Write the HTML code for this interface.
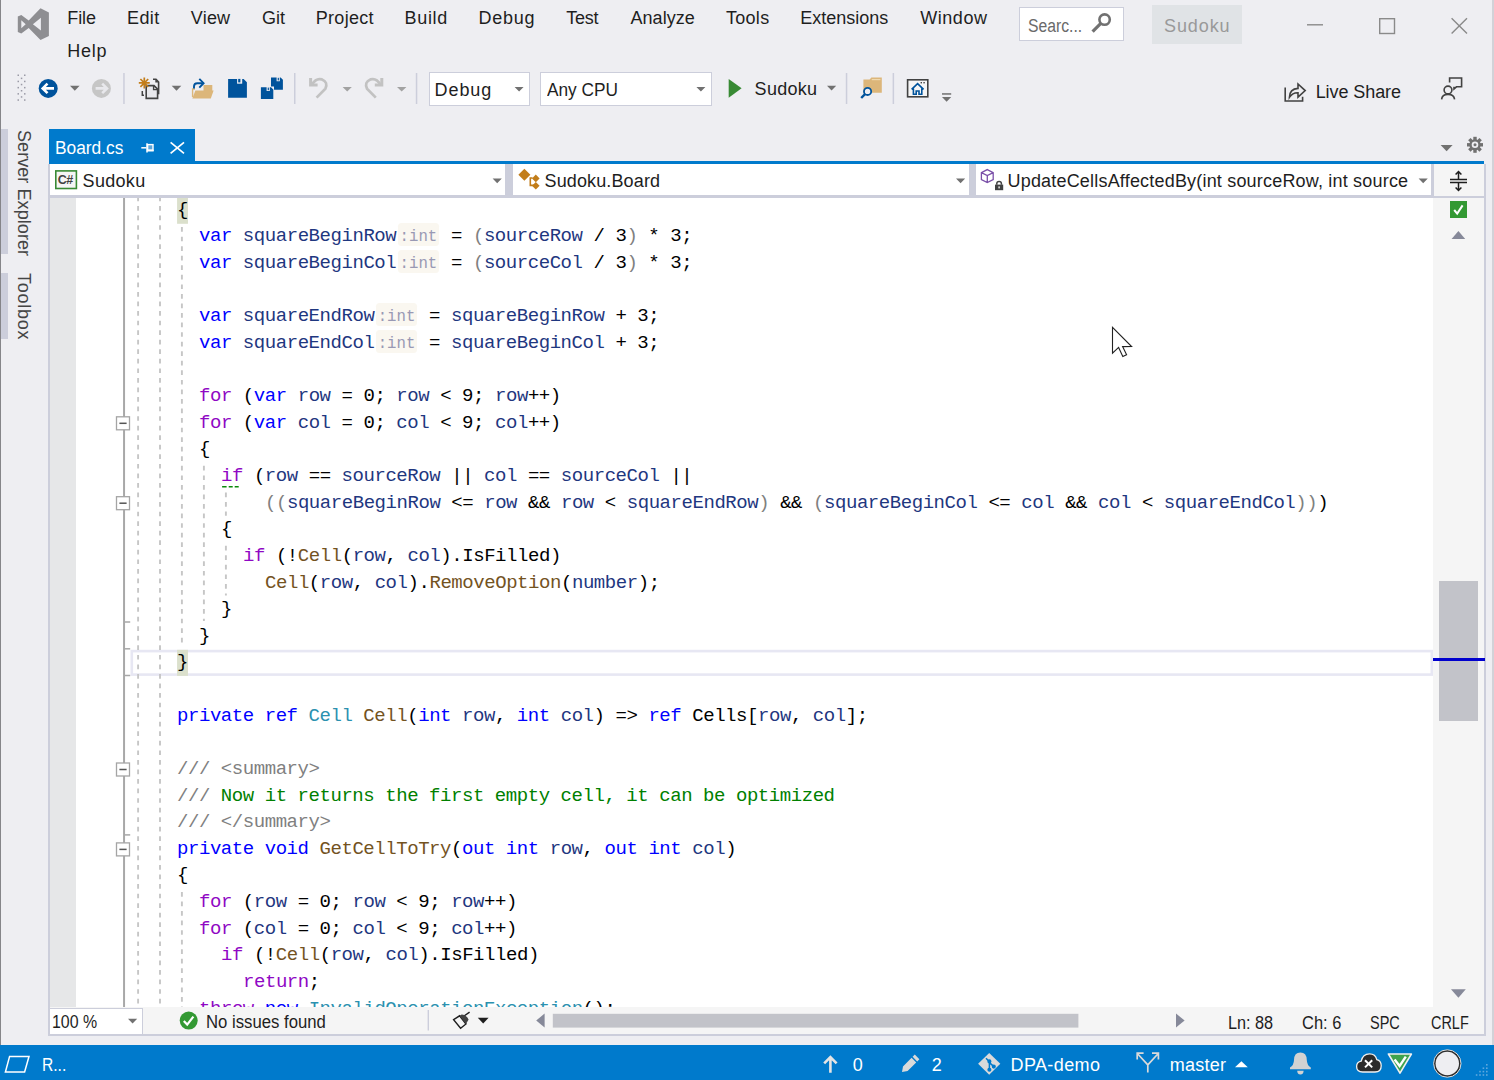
<!DOCTYPE html>
<html>
<head>
<meta charset="utf-8">
<title>Sudoku - Board.cs</title>
<style>
*{box-sizing:border-box;margin:0;padding:0}
html,body{width:1494px;height:1080px;overflow:hidden;background:#EEEEF2;}
body{position:relative;font-family:"Liberation Sans",sans-serif;color:#1E1E1E;font-size:18px;}
.abs{position:absolute}
.m{position:absolute;top:6.5px;font-size:18px;line-height:22px;color:#1E1E1E;white-space:nowrap}
.m2{top:39.5px}
#winborder{left:0;top:0;width:1.3px;height:1080px;background:#858589}
#winborder2{left:1492.3px;top:0;width:1.7px;height:1045px;background:#D2D2D8}
/* toolbar */
.sep{position:absolute;width:1px;background:#CCCEDB}
.combo{position:absolute;background:#fff;border:1px solid #CCCEDB;font-size:18px;line-height:22px;white-space:nowrap}
.arrow{position:absolute;width:0;height:0;border-left:5px solid transparent;border-right:5px solid transparent;border-top:5px solid #717171}
.tx{font-size:18px;line-height:22px;white-space:nowrap;color:#1E1E1E}
.st{color:#fff}
/* editor */
#editor{left:49px;top:198px;width:1384px;height:809px;background:#fff;overflow:hidden}
#gutter{left:0;top:0;width:27px;height:809px;background:#E6E7E8}
#code{left:0;top:-1.28px;width:1384px;font-family:"Liberation Mono",monospace;font-size:19px;letter-spacing:-0.443px;color:#000;white-space:pre}
.ln{position:absolute;left:0;height:27px;line-height:27px;white-space:pre}
.k{color:#0000FF}.c{color:#8F08C4}.v{color:#1F377F}.f{color:#74531F}.t{color:#2B91AF}.g{color:#808080}.gr{color:#008000}.p{color:#000}
.h{font-size:15.7px;letter-spacing:0;color:#9999B4;background:#FAF7F0;border-radius:3.5px;padding:5px 1.5px 0 1.5px;margin:0 1.3px 0 1.8px}
.bh{}
.ci{color:#8F08C4}
.vl{position:absolute;width:0;border-left:1px dashed #BDBDBD}
</style>
</head>
<body>
<div id="winborder" class="abs"></div>
<div id="winborder2" class="abs"></div>

<!-- MENU -->
<div id="menu">
<span id="m_file" class="m" style="left:67.3px;letter-spacing:-0.13px">File</span>
<span id="m_edit" class="m" style="left:127.0px;letter-spacing:0.37px">Edit</span>
<span id="m_view" class="m" style="left:190.8px;letter-spacing:0.20px">View</span>
<span id="m_git" class="m" style="left:262.0px;letter-spacing:0.05px">Git</span>
<span id="m_project" class="m" style="left:315.8px;letter-spacing:0.28px">Project</span>
<span id="m_build" class="m" style="left:404.6px;letter-spacing:0.67px">Build</span>
<span id="m_debug" class="m" style="left:478.4px;letter-spacing:0.80px">Debug</span>
<span id="m_test" class="m" style="left:566.3px;letter-spacing:-0.30px">Test</span>
<span id="m_analyze" class="m" style="left:630.5px;letter-spacing:0.05px">Analyze</span>
<span id="m_tools" class="m" style="left:726.0px;letter-spacing:0.28px">Tools</span>
<span id="m_extensions" class="m" style="left:800.2px">Extensions</span>
<span id="m_window" class="m" style="left:920.2px;letter-spacing:0.56px">Window</span>
<span id="m_help" class="m m2" style="left:67.3px;letter-spacing:0.70px">Help</span>

<svg class="abs" style="left:0;top:0" width="60" height="48" viewBox="0 0 60 48"><path fill="#8E8E92" fill-rule="evenodd" d="M40.5 8.3 L48.9 12.4 L48.9 35.9 L40.5 40 L28.7 28 L21.3 33.6 L17.8 31.9 L17.8 16.4 L21.3 14.9 L28.7 20.6 Z M21.3 20.2 L21.3 28.3 L25.7 24.2 Z M40.9 17.8 L40.9 30.6 L32.9 24.3 Z"/></svg>
<div class="abs" style="left:1019px;top:7px;width:105px;height:34px;background:#fff;border:1.5px solid #CCCEDB"></div>
<span class="abs" id="searchtxt" style="left:1027.7px;top:14.5px;font-size:18px;line-height:22px;color:#6A6A6A;white-space:nowrap;transform:scaleX(0.873);transform-origin:0 0">Searc...</span>
<svg class="abs" style="left:1090px;top:12px" width="23" height="23" viewBox="0 0 23 23"><circle cx="14.6" cy="7.6" r="5.2" fill="none" stroke="#717171" stroke-width="2.6"/><path d="M10.8 11.4 L2.6 19.6" stroke="#717171" stroke-width="3.2" stroke-linecap="butt"/></svg>
<div class="abs" style="left:1152px;top:5px;width:90px;height:39px;background:#E0E3E6"></div>
<span class="abs" id="titletxt" style="left:1164.0px;top:15px;font-size:18px;line-height:22px;color:#999999;white-space:nowrap;letter-spacing:0.90px">Sudoku</span>
<svg class="abs" style="left:1300px;top:10px" width="180" height="32" viewBox="0 0 180 32"><g stroke="#8A8A8A" stroke-width="1.4" fill="none"><path d="M7 14.8 H23"/><rect x="79.7" y="8.7" width="14.8" height="14.8"/><path d="M151.6 8.2 L167 23.6 M167 8.2 L151.6 23.6"/></g></svg>
</div>

<!-- TOOLBAR -->
<div id="toolbar">
<svg class="abs" style="left:0;top:68px" width="1000" height="42" viewBox="0 68 1000 42">
<!-- grip -->
<g fill="#9A9AA6">
<rect x="17.5" y="74.5" width="1.5" height="1.5"/><rect x="24" y="74.5" width="1.5" height="1.5"/>
<rect x="20.8" y="77.6" width="1.5" height="1.5"/>
<rect x="17.5" y="80.7" width="1.5" height="1.5"/><rect x="24" y="80.7" width="1.5" height="1.5"/>
<rect x="20.8" y="83.8" width="1.5" height="1.5"/>
<rect x="17.5" y="86.9" width="1.5" height="1.5"/><rect x="24" y="86.9" width="1.5" height="1.5"/>
<rect x="20.8" y="90" width="1.5" height="1.5"/>
<rect x="17.5" y="93.1" width="1.5" height="1.5"/><rect x="24" y="93.1" width="1.5" height="1.5"/>
<rect x="20.8" y="96.2" width="1.5" height="1.5"/>
<rect x="17.5" y="99.3" width="1.5" height="1.5"/><rect x="24" y="99.3" width="1.5" height="1.5"/>
</g>
<!-- back -->
<circle cx="48.2" cy="88.4" r="9.5" fill="#00539C"/>
<path d="M54 88.4 H43.5 M47.5 83.6 L42.7 88.4 L47.5 93.2" stroke="#fff" stroke-width="2.6" fill="none"/>
<path d="M70 85.8 H79.6 L74.8 90.8 Z" fill="#717171"/>
<!-- forward -->
<circle cx="101.4" cy="88.4" r="9.5" fill="#C6C6C6"/>
<path d="M95.6 88.4 H106 M102.2 83.6 L107 88.4 L102.2 93.2" stroke="#E8E8EC" stroke-width="2.6" fill="none"/>
<rect x="123.2" y="73" width="1.5" height="31" fill="#CCCEDB"/>
<!-- new item -->
<g>
<path d="M153 79.2 H156 L158.6 82 V93.5 H157" fill="none" stroke="#424242" stroke-width="1.6"/>
<path d="M155.3 79 V82.5 H158.8 Z" fill="#424242"/>
<path d="M146.2 85.6 H154 L157.6 89.2 V98.4 H146.2 Z" fill="#E8E8EC" stroke="#424242" stroke-width="1.6"/>
<path d="M153.6 85.6 V89.6 H157.6" fill="none" stroke="#424242" stroke-width="1.4"/>
<path d="M142.3 91 V95.2 H144" fill="none" stroke="#424242" stroke-width="1.5"/>
<g stroke="#C27D1A" stroke-width="1.7"><path d="M144.3 77.4 V88.4 M138.8 82.9 H149.8 M140.4 79 L148.2 86.8 M148.2 79 L140.4 86.8"/></g>
</g>
<path d="M171.7 85.8 H181.3 L176.5 90.8 Z" fill="#717171"/>
<!-- open folder -->
<g>
<path d="M203.5 85 H212.3 V91 H203.5 Z" fill="#DCB67A"/>
<path d="M192.3 98.6 L195.4 90.4 H213.6 L210.8 98.6 Z" fill="#DCB67A"/>
<path d="M192.6 97 V89 H195" stroke="#DCB67A" stroke-width="1.4" fill="none"/>
<path d="M194 88.6 V86.6 Q194 83.2 197.4 83.2 H202.6" fill="none" stroke="#00539C" stroke-width="1.9"/>
<path d="M199.3 78.8 L203.6 83.2 L199.3 87.6" fill="none" stroke="#00539C" stroke-width="1.9"/>
</g>
<!-- save -->
<path fill="#00539C" d="M228.1 79 H243.6 L246.9 82.3 V97.8 H228.1 Z"/><rect x="237.1" y="78.9" width="5.1" height="4.8" fill="#EEEEF2"/><rect x="238.2" y="78.9" width="2.2" height="3.5" fill="#00539C"/>
<!-- save all -->
<g fill="#00539C" fill-rule="evenodd">
<path d="M271 77.4 H280.6 L282.9 79.8 V89.8 H274 V86.6 H271 Z M276.6 77.4 V81.2 H279.8 V77.4 Z"/>
<rect x="277.7" y="77.8" width="1.2" height="2.6"/>
<path d="M260.9 87.2 H271 L273.3 89.6 V99.1 H260.9 Z M266.6 87.2 V91 H269.8 V87.2 Z"/>
<rect x="267.7" y="87.6" width="1.2" height="2.6"/>
</g>
<rect x="294" y="73" width="1.5" height="31" fill="#CCCEDB"/>
<!-- undo -->
<g fill="none" stroke="#C2C2C2" stroke-width="2.7">
<path d="M310.6 78 V85 H317.6" stroke-width="3"/>
<path d="M312 84.4 Q316 77.6 322 79.4 Q328.4 82.2 325.4 88.6 L316.6 97.6"/>
</g>
<path d="M342.6 87 H351.8 L347.2 91.6 Z" fill="#A2A2A2"/>
<!-- redo -->
<g fill="none" stroke="#C2C2C2" stroke-width="2.7">
<path d="M381.8 78 V85 H374.8" stroke-width="3"/>
<path d="M380.4 84.4 Q376.4 77.6 370.4 79.4 Q364 82.2 367 88.6 L375.8 97.6"/>
</g>
<path d="M397 87 H406.4 L401.7 91.6 Z" fill="#A2A2A2"/>
<rect x="415.8" y="73" width="1.5" height="31" fill="#CCCEDB"/>
<!-- run -->
<path d="M728.7 79 L741.6 88.3 L728.7 97.7 Z" fill="#388A34"/>
<path d="M827 85.8 H836.2 L831.6 90.6 Z" fill="#717171"/>
<rect x="845.8" y="73" width="1.5" height="31" fill="#CCCEDB"/>
<!-- find in files -->
<g>
<path d="M863.4 79.6 H869.6 L871.4 77.6 H881.8 V92.8 H863.4 Z" fill="#DCB67A"/>
<rect x="871.8" y="79" width="8.6" height="1.2" fill="#EFD9B0"/>
<circle cx="867.6" cy="91.4" r="3.6" fill="#EEEEF2" stroke="#00539C" stroke-width="1.8"/>
<path d="M865 94.2 L861.2 98" stroke="#00539C" stroke-width="2.4"/>
</g>
<rect x="892.6" y="73" width="1.5" height="31" fill="#CCCEDB"/>
<!-- home window -->
<g>
<rect x="907.6" y="79.8" width="20.2" height="17" fill="#F5F5F5" stroke="#424242" stroke-width="1.6"/>
<path d="M911.6 89.4 L917.6 83.6 L923.6 89.4 M913.4 88.6 V94.2 H916.2 V91 H919 V94.2 H921.8 V88.6" fill="none" stroke="#00539C" stroke-width="1.6"/>
<rect x="920.6" y="82" width="1.4" height="1.4" fill="#424242"/><rect x="923.4" y="82" width="1.4" height="1.4" fill="#424242"/>
</g>
<!-- overflow -->
<rect x="942" y="93.2" width="9.2" height="1.5" fill="#717171"/>
<path d="M942 97 H951.2 L946.6 101.8 Z" fill="#717171"/>
</svg>
<div class="combo" style="left:428.5px;top:71.5px;width:101.5px;height:34px;border-width:1.5px"></div>
<span class="abs tx" id="t_debug" style="left:434.5px;top:78.5px;letter-spacing:0.95px">Debug</span>
<div class="combo" style="left:540px;top:71.5px;width:172px;height:34px;border-width:1.5px"></div>
<span class="abs tx" id="t_anycpu" style="left:546.5px;top:78.5px;transform:scaleX(0.959);transform-origin:0 0">Any CPU</span>
<svg class="abs" style="left:510px;top:84px" width="200" height="10" viewBox="510 84 200 10"><path d="M514.6 87 H523.6 L519.1 91.6 Z M696.4 87 H705.4 L700.9 91.6 Z" fill="#717171"/></svg>
<span class="abs tx" id="t_run" style="left:754.6px;top:78px;letter-spacing:0.28px">Sudoku</span>
<!-- live share -->
<svg class="abs" style="left:1280px;top:74px" width="190" height="32" viewBox="1280 74 190 32">
<g fill="none" stroke="#424242" stroke-width="1.6">
<path d="M1285.2 87.6 V101 H1302.6 V96.8"/>
<path d="M1289.4 97.4 Q1289.6 88.8 1298 88.4 V84 L1305.2 90.6 L1298 97.2 V92.8 Q1292.6 92.6 1289.4 97.4 Z"/>
<circle cx="1448" cy="90" r="3.9"/>
<path d="M1441.6 99.4 Q1442 94.4 1448 94.4 Q1454 94.4 1454.6 99.4"/>
<path d="M1449.6 82.4 V78 H1461.6 V86.8 H1456.4 L1454 89 V86.8"/>
</g>
</svg>
<span class="abs tx" id="t_live" style="left:1315.7px;top:81px;letter-spacing:-0.08px">Live Share</span>
</div>

<div id="side">
<div class="abs" style="left:1.3px;top:129px;width:6.5px;height:124.5px;background:#CCCEDB"></div>
<div class="abs" style="left:1.3px;top:273px;width:6.5px;height:66px;background:#CCCEDB"></div>
<span class="abs tx" id="t_se" style="left:12.5px;top:130.3px;letter-spacing:0.07px;writing-mode:vertical-rl;line-height:22px;color:#444">Server Explorer</span>
<span class="abs tx" id="t_tb" style="left:12.5px;top:273px;letter-spacing:0.75px;writing-mode:vertical-rl;line-height:22px;color:#444">Toolbox</span>
</div>

<!-- TABS -->
<div id="tabs">
<div class="abs" style="left:49px;top:129px;width:145.5px;height:33px;background:#007ACC"></div>
<div class="abs" style="left:49px;top:160.5px;width:1435px;height:3.5px;background:#007ACC"></div>
<span class="abs tx" id="t_tab" style="left:54.8px;top:136.5px;color:#fff;transform:scaleX(0.963);transform-origin:0 0">Board.cs</span>
<svg class="abs" style="left:138px;top:138px" width="52" height="20" viewBox="138 138 52 20"><g stroke="#fff" fill="none">
<path d="M141.3 147.8 H146.4" stroke-width="1.5"/><path d="M147 143.2 V152.6" stroke-width="1.5"/><rect x="147.6" y="144.6" width="5.4" height="5.6" stroke-width="1.4" fill="#5BA7DD"/><path d="M147 150.6 H153.7" stroke-width="1.8"/>
<path d="M170.6 142.4 L184 153.4 M184 142.4 L170.6 153.4" stroke-width="1.7"/></g></svg>
<svg class="abs" style="left:1436px;top:134px" width="52" height="22" viewBox="1436 134 52 22">
<path d="M1440.6 145 H1452.6 L1446.6 151.2 Z" fill="#717171"/>
<g transform="translate(1475 144.8)"><g fill="#717171"><circle r="5.6"/>
<rect x="-1.7" y="-8" width="3.4" height="16"/><rect x="-1.7" y="-8" width="3.4" height="16" transform="rotate(45)"/><rect x="-1.7" y="-8" width="3.4" height="16" transform="rotate(90)"/><rect x="-1.7" y="-8" width="3.4" height="16" transform="rotate(135)"/></g>
<circle r="3.3" fill="#EEEEF2"/><circle r="1.5" fill="#717171"/></g>
</svg>
</div>

<!-- NAVBAR -->
<div id="navbar">
<div class="abs" style="left:48px;top:164px;width:1437.5px;height:34px;background:#CCCEDB"></div>
<div class="abs" style="left:50px;top:164px;width:455px;height:31.3px;background:#fff"></div>
<div class="abs" style="left:512.8px;top:164px;width:456px;height:31.3px;background:#fff"></div>
<div class="abs" style="left:976px;top:164px;width:455.2px;height:31.3px;background:#fff"></div>
<div class="abs" style="left:1434px;top:164px;width:50px;height:31.8px;background:#F5F5F5"></div>
<svg class="abs" style="left:50px;top:164px" width="1434" height="32" viewBox="50 164 1434 32">
<path d="M492.6 178.6 H501.8 L497.2 183.2 Z M956 178.6 H965.2 L960.6 183.2 Z M1418.6 178.6 H1427.8 L1423.2 183.2 Z" fill="#717171"/>
<!-- c# icon -->
<rect x="55.8" y="170.9" width="20.6" height="17.6" fill="#F5F5F5" stroke="#388A34" stroke-width="1.6"/>
<!-- class icon -->
<g fill="#C27D1A"><path d="M524.4 168.8 L530.4 174.8 L524.4 180.8 L518.4 174.8 Z"/>
<path d="M529.5 177.2 H532.6 V178.8 H531.1 V184.6 H534 V186.2 H529.5 Z"/>
<path d="M535.8 174.6 L539.6 178.4 L535.8 182.2 L532 178.4 Z"/><path d="M535.8 182 L539.6 185.8 L535.8 189.6 L532 185.8 Z"/></g>
<!-- cube -->
<g fill="none" stroke="#7A4FA8" stroke-width="1.3"><path d="M987.3 169.6 L993.2 172.6 V179.6 L987.3 182.6 L981.4 179.6 V172.6 Z M981.4 172.6 L987.3 175.6 L993.2 172.6 M987.3 175.6 V182.6"/></g>
<!-- lock -->
<rect x="995" y="184.6" width="8.2" height="5.6" fill="#424242"/><path d="M996.8 184.8 V183.6 Q996.8 181.4 999.1 181.4 Q1001.4 181.4 1001.4 183.6 V184.8" fill="none" stroke="#424242" stroke-width="1.5"/><rect x="998.4" y="186.4" width="1.4" height="2" fill="#EEE"/>
<!-- split -->
<g stroke="#1E1E1E" stroke-width="1.5" fill="none"><path d="M1450 179.4 H1467 M1450 182.6 H1467 M1458.5 172 V179 M1458.5 183 V190 M1455.6 174.6 L1458.5 171.6 L1461.4 174.6 M1455.6 187.4 L1458.5 190.4 L1461.4 187.4"/></g>
</svg>
<span class="abs" style="left:57.8px;top:171.8px;font-size:12.5px;line-height:17px;font-weight:bold;color:#424242;letter-spacing:-0.6px">C#</span>
<span class="abs tx" id="t_nav1" style="left:82.6px;top:170px;letter-spacing:0.30px">Sudoku</span>
<span class="abs tx" id="t_nav2" style="left:544.5px;top:170px;letter-spacing:0.13px">Sudoku.Board</span>
<div class="abs" style="left:1008px;top:166px;width:400px;height:28px;overflow:hidden"><span class="abs tx" id="t_nav3" style="left:-0.5px;top:4px;letter-spacing:0.19px">UpdateCellsAffectedBy(int sourceRow, int sourceCol, int number)</span></div>
</div>

<!-- EDITOR -->
<div id="editor" class="abs">
<div id="gutter" class="abs"></div>
<div id="guides">
<svg class="abs" style="left:0;top:0" width="1384" height="809" viewBox="49 198 1384 809">
<rect x="131.8" y="651.1" width="1300" height="23.5" fill="none" stroke="#E7E7F3" stroke-width="2.6"/>
<rect x="177.07" y="197" width="10.9" height="26.8" fill="#DBE0CC"/>
<rect x="177.07" y="649.8" width="10.9" height="26.1" fill="#DBE0CC"/>
<path d="M222.1 486.75 H226.6 M228.7 486.75 H232.7 M234.7 486.75 H238.7" stroke="#0A8A0A" stroke-width="1.7" fill="none"/>
<path d="M138.1 196.50 V1007.00" stroke="#C6C6C6" stroke-width="1.9" stroke-dasharray="4.7 4.85" fill="none"/>
<path d="M160 196.50 V1007.00" stroke="#C6C6C6" stroke-width="1.9" stroke-dasharray="4.7 4.85" fill="none"/>
<path d="M181.9 227.10 V646.00" stroke="#C6C6C6" stroke-width="1.9" stroke-dasharray="4.7 4.85" fill="none"/>
<path d="M181.9 891.95 V1007.00" stroke="#C6C6C6" stroke-width="1.9" stroke-dasharray="4.7 4.85" fill="none"/>
<path d="M203.9 465.87 V621.00" stroke="#C6C6C6" stroke-width="1.9" stroke-dasharray="4.7 4.85" fill="none"/>
<path d="M225.9 492.50 V515.63" stroke="#C6C6C6" stroke-width="1.9" stroke-dasharray="4.7 4.85" fill="none"/>
<path d="M225.9 545.76 V595.52" stroke="#C6C6C6" stroke-width="1.9" stroke-dasharray="4.7 4.85" fill="none"/>
<rect x="123.05" y="198" width="2" height="809" fill="#A8A8A8"/>
<rect x="124" y="621.25" width="6.2" height="1.5" fill="#A8A8A8"/>
<rect x="124" y="648.05" width="6.2" height="1.5" fill="#A8A8A8"/>
<rect x="124" y="674.75" width="6.2" height="1.5" fill="#A8A8A8"/>
<rect x="124" y="834.15" width="6.2" height="1.5" fill="#A8A8A8"/>
<rect x="116.5" y="416.81" width="13" height="13" fill="#fff" stroke="#A5A5A5" stroke-width="1.3"/><rect x="119.4" y="422.56" width="7.2" height="1.5" fill="#555"/>
<rect x="116.5" y="496.70" width="13" height="13" fill="#fff" stroke="#A5A5A5" stroke-width="1.3"/><rect x="119.4" y="502.45" width="7.2" height="1.5" fill="#555"/>
<rect x="116.5" y="763.00" width="13" height="13" fill="#fff" stroke="#A5A5A5" stroke-width="1.3"/><rect x="119.4" y="768.75" width="7.2" height="1.5" fill="#555"/>
<rect x="116.5" y="842.89" width="13" height="13" fill="#fff" stroke="#A5A5A5" stroke-width="1.3"/><rect x="119.4" y="848.64" width="7.2" height="1.5" fill="#555"/>
</svg>
</div>
<div id="code" class="abs">
<div class="ln" style="top:0.00px;left:128px"><span class="bh">{</span></div>
<div class="ln" style="top:26.63px;left:150px"><span class="k">var</span> <span class="v">squareBeginRow</span><span class="h">:int</span> = <span class="g">(</span><span class="v">sourceRow</span> / 3<span class="g">)</span> * 3;</div>
<div class="ln" style="top:53.26px;left:150px"><span class="k">var</span> <span class="v">squareBeginCol</span><span class="h">:int</span> = <span class="g">(</span><span class="v">sourceCol</span> / 3<span class="g">)</span> * 3;</div>
<div class="ln" style="top:106.52px;left:150px"><span class="k">var</span> <span class="v">squareEndRow</span><span class="h">:int</span> = <span class="v">squareBeginRow</span> + 3;</div>
<div class="ln" style="top:133.15px;left:150px"><span class="k">var</span> <span class="v">squareEndCol</span><span class="h">:int</span> = <span class="v">squareBeginCol</span> + 3;</div>
<div class="ln" style="top:186.41px;left:150px"><span class="c">for</span> (<span class="k">var</span> <span class="v">row</span> = 0; <span class="v">row</span> &lt; 9; <span class="v">row</span>++)</div>
<div class="ln" style="top:213.04px;left:150px"><span class="c">for</span> (<span class="k">var</span> <span class="v">col</span> = 0; <span class="v">col</span> &lt; 9; <span class="v">col</span>++)</div>
<div class="ln" style="top:239.67px;left:150px">{</div>
<div class="ln" style="top:266.30px;left:172px"><span class="ci">if</span> (<span class="v">row</span> == <span class="v">sourceRow</span> || <span class="v">col</span> == <span class="v">sourceCol</span> ||</div>
<div class="ln" style="top:292.93px;left:216px"><span class="g">((</span><span class="v">squareBeginRow</span> &lt;= <span class="v">row</span> &amp;&amp; <span class="v">row</span> &lt; <span class="v">squareEndRow</span><span class="g">)</span> &amp;&amp; <span class="g">(</span><span class="v">squareBeginCol</span> &lt;= <span class="v">col</span> &amp;&amp; <span class="v">col</span> &lt; <span class="v">squareEndCol</span><span class="g">))</span>)</div>
<div class="ln" style="top:319.56px;left:172px">{</div>
<div class="ln" style="top:346.19px;left:194px"><span class="c">if</span> (!<span class="f">Cell</span>(<span class="v">row</span>, <span class="v">col</span>).IsFilled)</div>
<div class="ln" style="top:372.82px;left:216px"><span class="f">Cell</span>(<span class="v">row</span>, <span class="v">col</span>).<span class="f">RemoveOption</span>(<span class="v">number</span>);</div>
<div class="ln" style="top:399.45px;left:172px">}</div>
<div class="ln" style="top:426.08px;left:150px">}</div>
<div class="ln" style="top:452.71px;left:128px"><span class="bh">}</span></div>
<div class="ln" style="top:505.97px;left:128px"><span class="k">private</span> <span class="k">ref</span> <span class="t">Cell</span> <span class="f">Cell</span>(<span class="k">int</span> <span class="v">row</span>, <span class="k">int</span> <span class="v">col</span>) =&gt; <span class="k">ref</span> Cells[<span class="v">row</span>, <span class="v">col</span>];</div>
<div class="ln" style="top:559.23px;left:128px"><span class="g">/// &lt;summary&gt;</span></div>
<div class="ln" style="top:585.86px;left:128px"><span class="g">///</span> <span class="gr">Now it returns the first empty cell, it can be optimized</span></div>
<div class="ln" style="top:612.49px;left:128px"><span class="g">/// &lt;/summary&gt;</span></div>
<div class="ln" style="top:639.12px;left:128px"><span class="k">private</span> <span class="k">void</span> <span class="f">GetCellToTry</span>(<span class="k">out</span> <span class="k">int</span> <span class="v">row</span>, <span class="k">out</span> <span class="k">int</span> <span class="v">col</span>)</div>
<div class="ln" style="top:665.75px;left:128px">{</div>
<div class="ln" style="top:692.38px;left:150px"><span class="c">for</span> (<span class="v">row</span> = 0; <span class="v">row</span> &lt; 9; <span class="v">row</span>++)</div>
<div class="ln" style="top:719.01px;left:150px"><span class="c">for</span> (<span class="v">col</span> = 0; <span class="v">col</span> &lt; 9; <span class="v">col</span>++)</div>
<div class="ln" style="top:745.64px;left:172px"><span class="c">if</span> (!<span class="f">Cell</span>(<span class="v">row</span>, <span class="v">col</span>).IsFilled)</div>
<div class="ln" style="top:772.27px;left:194px"><span class="c">return</span>;</div>
<div class="ln" style="top:798.90px;left:150px"><span class="c">throw</span> <span class="k">new</span> <span class="t">InvalidOperationException</span>();</div>
</div>
</div>

<!-- VSCROLL -->
<div id="vscroll">
<div class="abs" style="left:1433px;top:198px;width:51px;height:809px;background:#F5F5F5"></div>
<div class="abs" style="left:1484px;top:198px;width:1.5px;height:837px;background:#CCCEDB"></div>
<div class="abs" style="left:48px;top:198px;width:1.5px;height:837px;background:#CCCEDB"></div>
<div class="abs" style="left:1450px;top:201px;width:17px;height:17px;background:#339933"></div>
<svg class="abs" style="left:1450px;top:201px" width="17" height="17" viewBox="0 0 17 17"><path d="M4.2 9 L7.2 12.6 L12.6 4.4" fill="none" stroke="#fff" stroke-width="2"/></svg>
<svg class="abs" style="left:1448px;top:228px" width="22" height="14" viewBox="1448 228 22 14"><path d="M1451.6 239 H1465.2 L1458.4 231 Z" fill="#868999"/></svg>
<svg class="abs" style="left:1448px;top:986px" width="22" height="14" viewBox="1448 986 22 14"><path d="M1451 989.2 H1465.8 L1458.4 997.8 Z" fill="#868999"/></svg>
<div class="abs" style="left:1439px;top:581.3px;width:39px;height:140px;background:#C2C3C9"></div>
<div class="abs" style="left:1432.6px;top:658.2px;width:52px;height:3px;background:#0000CD"></div>
</div>

<!-- BOTTOM BAR -->
<div id="bottombar">
<div class="abs" style="left:49.5px;top:1007px;width:1434.5px;height:27px;background:#F5F5F5"></div>
<div class="abs" style="left:48px;top:1034px;width:1437.5px;height:1.5px;background:#CCCEDB"></div>
<div class="abs" style="left:49px;top:1007.5px;width:93.5px;height:27px;background:#fff;border:1.5px solid #CCCEDB"></div>
<span class="abs tx" id="t_zoom" style="left:52.3px;top:1011px;transform:scaleX(0.885);transform-origin:0 0">100 %</span>
<svg class="abs" style="left:120px;top:1007px" width="1070" height="28" viewBox="120 1007 1070 28">
<path d="M128 1018.8 H137.2 L132.6 1023.6 Z" fill="#717171"/>
<circle cx="188.7" cy="1020.6" r="9" fill="#339933"/><path d="M183.8 1021 L187.2 1024.6 L193.4 1016.6" fill="none" stroke="#fff" stroke-width="2.2"/>
<rect x="427.6" y="1010" width="1.4" height="20.5" fill="#CCCEDB"/>
<g stroke="#1E1E1E" stroke-width="1.4" fill="none"><path d="M453.6 1019.6 L459.6 1015.8 L466 1024 L460.6 1028.2 Z" fill="#F5F5F5"/><path d="M462.6 1017 L469.6 1012.2"/></g><path d="M459.6 1015.8 L466 1024 L468.6 1019.6 Q466 1014.4 461.6 1014.4 Z" fill="#424242"/>
<path d="M477.8 1017.8 H488.6 L483.2 1023.6 Z" fill="#1E1E1E"/>
<path d="M544.6 1013.6 V1027.4 L536.2 1020.5 Z" fill="#868999"/>
<rect x="552.8" y="1013.8" width="525.6" height="13.8" fill="#C2C3C9"/>
<path d="M1176 1013.6 V1027.4 L1184.6 1020.5 Z" fill="#868999"/>
</svg>
<span class="abs tx" id="t_noiss" style="left:205.5px;top:1011px;transform:scaleX(0.929);transform-origin:0 0">No issues found</span>
<span class="abs tx" id="t_ln" style="left:1228.4px;top:1011.5px;transform:scaleX(0.902);transform-origin:0 0">Ln: 88</span>
<span class="abs tx" id="t_ch" style="left:1301.5px;top:1011.5px;transform:scaleX(0.914);transform-origin:0 0">Ch: 6</span>
<span class="abs tx" id="t_spc" style="left:1369.5px;top:1011.5px;transform:scaleX(0.806);transform-origin:0 0">SPC</span>
<span class="abs tx" id="t_crlf" style="left:1430.7px;top:1011.5px;transform:scaleX(0.802);transform-origin:0 0">CRLF</span>
</div>

<svg class="abs" style="left:1105px;top:320px" width="34" height="44" viewBox="1105 320 34 44"><path d="M1112.5 327.4 L1112.5 353.2 L1118.6 347.4 L1122.8 356.6 L1126.6 354.7 L1122.6 346.6 L1131.6 346.5 Z" fill="#fff" stroke="#222" stroke-width="1.1" stroke-linejoin="miter"/></svg>

<!-- STATUS BAR -->
<div id="status">
<div class="abs" style="left:0;top:1044.7px;width:1494px;height:36px;background:#007ACC"></div>
<svg class="abs" style="left:0;top:1045px" width="1494" height="35" viewBox="0 1045 1494 35">
<path d="M9.6 1056.4 H29 L24.6 1072 H5.4 Z" fill="none" stroke="#fff" stroke-width="1.5"/>
<g stroke="#E4E4E4" stroke-width="2.6" fill="none"><path d="M830.4 1072.8 V1057.4 M824.2 1063.4 L830.4 1057 L836.6 1063.4"/></g>
<g fill="#DADADA"><path d="M914.8 1054.6 L919.4 1059.2 L917.2 1061.4 L912.6 1056.8 Z M911.6 1057.8 L916.2 1062.4 L907.6 1071 L902 1072 L903 1066.4 Z"/></g>
<g><path d="M989.2 1052.9 L1000.3 1063.8 L989.2 1074.7 L978.1 1063.8 Z" fill="#DADADA"/><g stroke="#007ACC" stroke-width="1.5" fill="#007ACC"><path d="M986 1058.2 L989.4 1061.6 V1069.6 M989.4 1062.6 L993.6 1066.4" fill="none"/><circle cx="989.4" cy="1069.8" r="1.3"/><circle cx="993.8" cy="1066.6" r="1.3"/><circle cx="989.4" cy="1061.4" r="1.3"/></g></g>
<g stroke="#DADADA" stroke-width="1.7" fill="none"><path d="M1147.8 1072.6 V1064.8 L1137.8 1054 M1147.8 1064.8 L1157.8 1054 M1137.2 1059.6 V1053.2 H1143.6 M1152 1053.2 H1158.4 V1059.6"/></g>
<path d="M1235 1067.2 H1247.8 L1241.4 1061.2 Z" fill="#fff"/>
<g fill="#D2D2D2"><path d="M1300.4 1052.6 Q1306.6 1052.6 1306.8 1060 Q1307 1065.4 1310.8 1067.6 V1069.2 H1290 V1067.6 Q1293.800 1065.4 1294 1060 Q1294.200 1052.6 1300.4 1052.6 Z"/><path d="M1297.200 1070.800 H1303.600 Q1303.600 1074.400 1300.400 1074.400 Q1297.200 1074.400 1297.200 1070.800 Z"/></g>
<g><path d="M1362.6 1072 Q1356.600 1072 1356.600 1066.600 Q1356.600 1062 1361.200 1061.200 Q1362.600 1053.800 1369.600 1053.800 Q1375.400 1053.800 1376.800 1059.600 Q1381.200 1060.600 1381.200 1065.800 Q1381.200 1072 1375 1072 Z" fill="#2B2B2B" stroke="#F0F0F0" stroke-width="1.300"/><path d="M1365 1060.200 L1372.200 1067.400 M1372.200 1060.200 L1365 1067.400" stroke="#fff" stroke-width="2"/></g>
<g><path d="M1388.400 1054 H1411.400 L1400 1073.200 Z" fill="#3FA34D" stroke="#F0F0F0" stroke-width="1.600" stroke-linejoin="round"/><path d="M1394.600 1059.600 L1399.600 1066 L1405.800 1056.600" fill="none" stroke="#fff" stroke-width="2.400"/></g>
<circle cx="1447.300" cy="1063.500" r="13.700" fill="#2B2B2B" stroke="#F0F0F0" stroke-width="0.9"/><circle cx="1447.300" cy="1063.500" r="11.700" fill="#EEEEF2"/>
<g fill="#5FA8DE"><rect x="1486" y="1064" width="1.6" height="1.6"/><rect x="1486" y="1067.400" width="1.6" height="1.6"/><rect x="1482.600" y="1067.400" width="1.6" height="1.6"/><rect x="1486" y="1070.800" width="1.6" height="1.6"/><rect x="1482.600" y="1070.800" width="1.6" height="1.6"/><rect x="1479.200" y="1070.800" width="1.6" height="1.6"/><rect x="1486" y="1074.200" width="1.6" height="1.6"/><rect x="1482.600" y="1074.200" width="1.6" height="1.6"/><rect x="1479.200" y="1074.200" width="1.6" height="1.6"/><rect x="1475.800" y="1074.200" width="1.6" height="1.6"/></g>
</svg>
<span class="abs tx st" id="t_r" style="left:42.3px;top:1053.5px;transform:scaleX(0.865);transform-origin:0 0">R...</span>
<span class="abs tx st" id="t_0" style="left:852.7px;top:1053.5px;letter-spacing:0.10px">0</span>
<span class="abs tx st" id="t_2" style="left:931.8px;top:1053.5px;letter-spacing:-0.10px">2</span>
<span class="abs tx st" id="t_dpa" style="left:1010.5px;top:1053.5px;letter-spacing:0.40px">DPA-demo</span>
<span class="abs tx st" id="t_master" style="left:1169.8px;top:1053.5px;letter-spacing:0.22px">master</span>
</div>

</body>
</html>
